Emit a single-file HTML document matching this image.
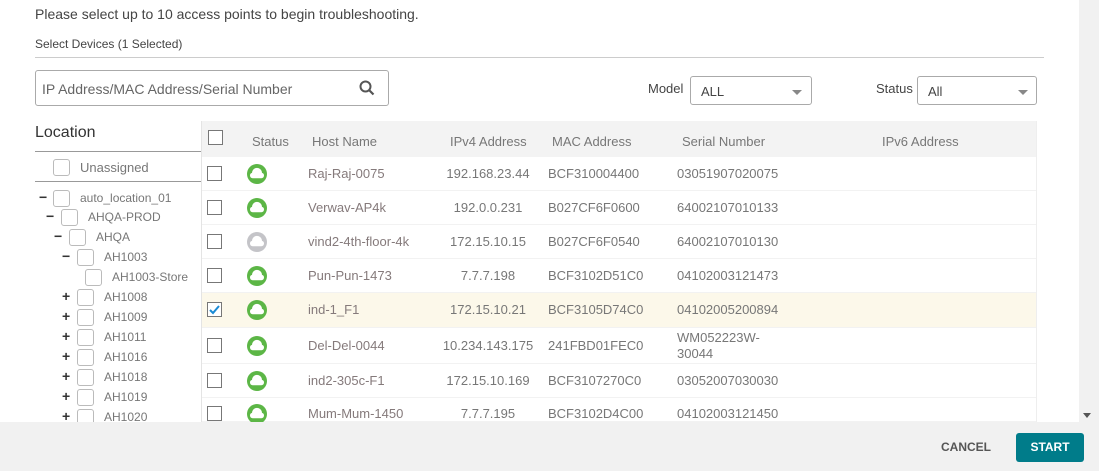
<!DOCTYPE html>
<html><head><style>
*{margin:0;padding:0;box-sizing:border-box}
body{width:1099px;height:471px;overflow:hidden;background:#fff;font-family:"Liberation Sans",sans-serif;color:#555;position:relative;font-size:13px}
.a{position:absolute;white-space:nowrap}
.cb{position:absolute;width:15px;height:15px;border:1px solid #777;background:#fff}
.tcb{position:absolute;width:17px;height:17px;border:1px solid #bbb;border-radius:3px;background:#fff}
.g{color:#777}
.h{color:#857a7b}
.sel{border:1px solid #aaa;border-radius:3px;background:#fff;height:29px}
.tri{position:absolute;width:0;height:0;border-left:5px solid transparent;border-right:5px solid transparent;border-top:5px solid #666}
</style></head><body>
<div class="a" style="left:35px;top:6px;font-size:14px;color:#444">Please select up to 10 access points to begin troubleshooting.</div>
<div class="a" style="left:35px;top:37px;font-size:12px;color:#444">Select Devices (1 Selected)</div>
<div class="a" style="left:35px;top:57px;width:1009px;height:1px;background:#ccc"></div>
<div class="a sel" style="left:35px;top:70px;width:354px;height:36px"></div>
<div class="a" style="left:42px;top:81px;font-size:14px;color:#666">IP Address/MAC Address/Serial Number</div>
<svg class="a" style="left:359px;top:80px" width="16" height="16" viewBox="0 0 16 16"><circle cx="6.5" cy="6.5" r="5" fill="none" stroke="#555" stroke-width="2"/><path d="M10 10l4.5 4.5" stroke="#555" stroke-width="2.2"/></svg>
<div class="a" style="left:648px;top:81px;color:#444">Model</div>
<div class="a sel" style="left:690px;top:76px;width:122px"></div>
<div class="a" style="left:701px;top:84px;color:#444">ALL</div>
<div class="tri" style="left:792px;top:90px;border-top-color:#888"></div>
<div class="a" style="left:876px;top:81px;color:#444">Status</div>
<div class="a sel" style="left:917px;top:76px;width:120px"></div>
<div class="a" style="left:928px;top:84px;color:#444">All</div>
<div class="tri" style="left:1018px;top:90px;border-top-color:#888"></div>
<div class="a" style="left:1079px;top:0;width:20px;height:471px;background:#f1f1f1"></div>
<div class="tri" style="left:1083px;top:413px;border-top-color:#555;border-left-width:4px;border-right-width:4px"></div>
<div class="a" style="left:35px;top:124px;font-size:16px;color:#333">Location</div>
<div class="a" style="left:35px;top:151px;width:166px;height:1px;background:#999"></div>
<div class="a" style="left:35px;top:181px;width:166px;height:1px;background:#999"></div>
<div class="tcb" style="left:53px;top:159px"></div><div class="a g" style="left:80px;top:160px">Unassigned</div>
<div id="tree"></div>
<div class="a" style="left:201px;top:121px;width:836px;height:36px;background:#f3f3f3"></div>
<div class="a" style="left:201px;top:121px;width:1px;height:301px;background:#e4e4e4"></div>
<div class="a" style="left:1036px;top:121px;width:1px;height:301px;background:#eee"></div>
<div class="cb" style="left:208px;top:130px"></div>
<div class="a g" style="left:252px;top:134px">Status</div>
<div class="a g" style="left:312px;top:134px">Host Name</div>
<div class="a g" style="left:450px;top:134px">IPv4 Address</div>
<div class="a g" style="left:552px;top:134px">MAC Address</div>
<div class="a g" style="left:682px;top:134px">Serial Number</div>
<div class="a g" style="left:882px;top:134px">IPv6 Address</div>
<div id="rows"></div>
<div class="a" style="left:0;top:422px;width:1079px;height:49px;background:#f1f1f1"></div>
<div class="a" style="left:941px;top:440px;font-weight:bold;font-size:12px;color:#555">CANCEL</div>
<div class="a" style="left:1016px;top:433px;width:68px;height:29px;background:#007c8a;border-radius:3px;color:#fff;font-weight:bold;font-size:12px;text-align:center;line-height:29px">START</div>
<script>
var t=[["−",39,53,80,"auto_location_01",198],["−",46,61,88,"AHQA-PROD",217],["−",54,69,96,"AHQA",237],["−",62,77,104,"AH1003",257],["",0,85,112,"AH1003-Store",277],["+",62,77,104,"AH1008",297],["+",62,77,104,"AH1009",317],["+",62,77,104,"AH1011",337],["+",62,77,104,"AH1016",357],["+",62,77,104,"AH1018",377],["+",62,77,104,"AH1019",397],["+",62,77,104,"AH1020",417]];
var h="";t.forEach(function(r){var y=r[5];if(r[0])h+='<div class="a" style="left:'+r[1]+'px;top:'+(y-9)+'px;font-weight:bold;color:#333;font-size:14px">'+r[0]+'</div>';h+='<div class="tcb" style="left:'+r[2]+'px;top:'+(y-8)+'px"></div><div class="a g" style="left:'+r[3]+'px;top:'+(y-7)+'px;font-size:12px">'+r[4]+'</div>';});
document.getElementById("tree").innerHTML=h;
var R=[["Raj-Raj-0075","192.168.23.44","BCF310004400","03051907020075",174,1],["Verwav-AP4k","192.0.0.231","B027CF6F0600","64002107010133",208,1],["vind2-4th-floor-4k","172.15.10.15","B027CF6F0540","64002107010130",242,0],["Pun-Pun-1473","7.7.7.198","BCF3102D51C0","04102003121473",276,1],["ind-1_F1","172.15.10.21","BCF3105D74C0","04102005200894",310,1],["Del-Del-0044","10.234.143.175","241FBD01FEC0","WM052223W-<br>30044",346,1],["ind2-305c-F1","172.15.10.169","BCF3107270C0","03052007030030",381,1],["Mum-Mum-1450","7.7.7.195","BCF3102D4C00","04102003121450",414,1]];
h="";R.forEach(function(r,i){var y=r[4];var top=(i==0?157:(R[i-1][4]+y)/2);var bot=(i==R.length-1?422:(y+R[i+1][4])/2);
h+='<div class="a" style="left:202px;top:'+top+'px;width:834px;height:'+(bot-top)+'px;border-bottom:1px solid #f2f2f2;background:'+(i==4?'#fcf8ea':'transparent')+'"></div>';
h+='<div class="cb" style="left:207px;top:'+(y-8)+'px">'+(i==4?'<svg width="13" height="13" style="position:absolute;left:0;top:0"><path d="M2 7l3 3 6-7" stroke="#1a8ad4" stroke-width="2" fill="none"/></svg>':'')+'</div>';
var c=r[5]?'#5cb646':'#c4c4c8';
h+='<svg class="a" style="left:247px;top:'+(y-10)+'px" width="20" height="20" viewBox="0 0 20 20"><circle cx="10" cy="10" r="10" fill="'+c+'"/><path d="M5.6 14.2h8.8a2.7 2.7 0 0 0 0.6-5.3 5 5 0 0 0 -10 0 2.7 2.7 0 0 0 0.6 5.3z" fill="#fff"/></svg>';
var mt=r[3].indexOf("<br>")>0;
h+='<div class="a h" style="left:308px;top:'+(y-8)+'px">'+r[0]+'</div>';
h+='<div class="a g" style="left:438px;top:'+(y-8)+'px;width:100px;text-align:center">'+r[1]+'</div>';
h+='<div class="a g" style="left:548px;top:'+(y-8)+'px">'+r[2]+'</div>';
h+='<div class="a g" style="left:677px;top:'+(mt?y-16:y-8)+'px;line-height:16px">'+r[3]+'</div>';});
document.getElementById("rows").innerHTML=h;
</script>
</body></html>
